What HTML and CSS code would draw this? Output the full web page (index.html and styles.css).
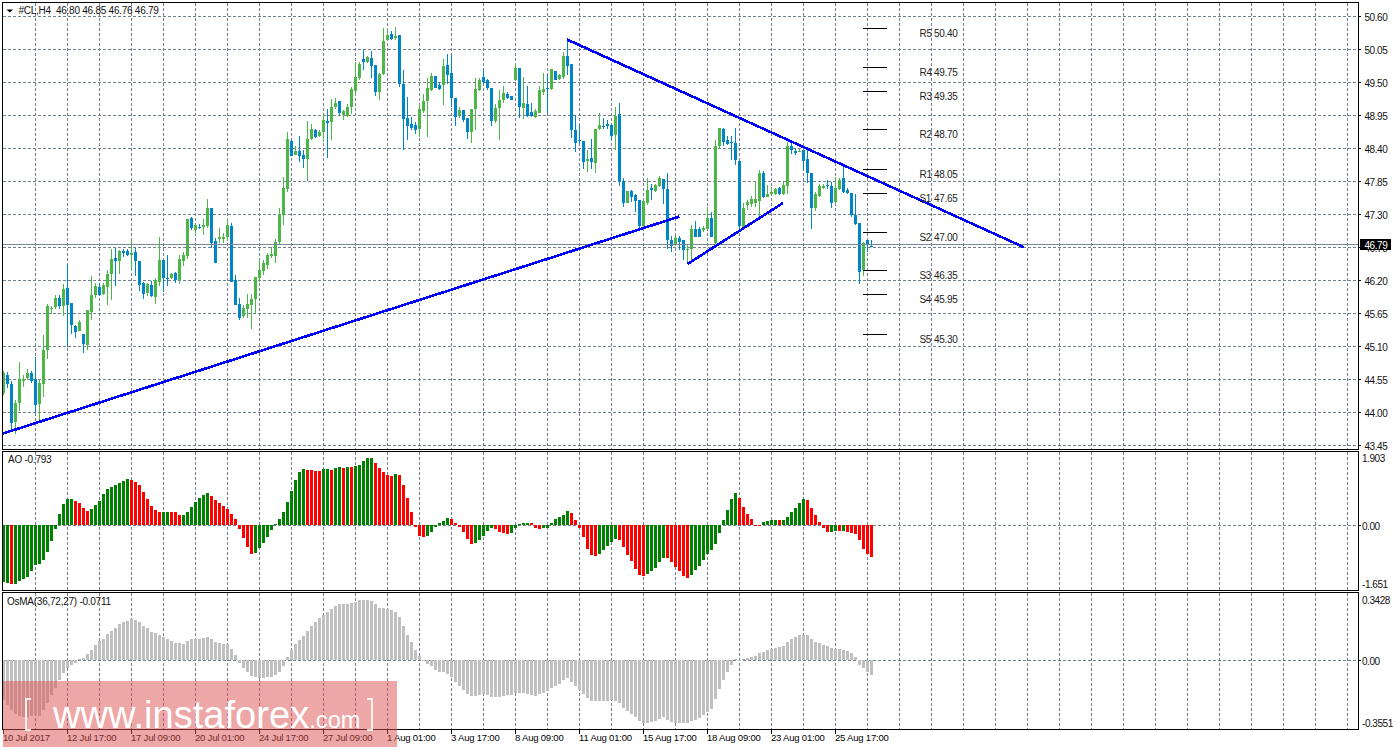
FILE: index.html
```html
<!DOCTYPE html>
<html lang="en">
<head>
<meta charset="utf-8">
<title>#CL,H4</title>
<link rel="stylesheet" href="styles.css">
</head>
<body>
<main class="terminal">
  <svg class="pane pane-main" id="main" viewBox="0 0 1398 450" aria-label="#CL,H4 candlestick chart"></svg>
  <svg class="pane pane-ao" id="ao" viewBox="0 450 1398 141" aria-label="Awesome Oscillator"></svg>
  <svg class="pane pane-osma" id="osma" viewBox="0 591 1398 139" aria-label="OsMA"></svg>
  <div class="time-axis">
    <span class="time">10 Jul 2017</span>
    <span class="time">12 Jul 17:00</span>
    <span class="time">17 Jul 09:00</span>
    <span class="time">20 Jul 01:00</span>
    <span class="time">24 Jul 17:00</span>
    <span class="time">27 Jul 09:00</span>
    <span class="time">1 Aug 01:00</span>
    <span class="time">3 Aug 17:00</span>
    <span class="time">8 Aug 09:00</span>
    <span class="time">11 Aug 01:00</span>
    <span class="time">15 Aug 17:00</span>
    <span class="time">18 Aug 09:00</span>
    <span class="time">23 Aug 01:00</span>
    <span class="time">25 Aug 17:00</span>
  </div>
  <div class="watermark">
    <span class="bracket bracket-left"></span>
    <span class="wm-text">www.instaforex<small class="wm-small">.com</small></span>
    <span class="bracket bracket-right"></span>
  </div>
</main>
<script src="chart.js"></script>
</body>
</html>
```
FILE: styles.css
```css
html, body {
  margin: 0;
  padding: 0;
  background: #fff;
}
.terminal {
  position: relative;
  display: flex;
  flex-direction: column;
  width: 1398px;
  height: 750px;
  overflow: hidden;
  background: #fff;
  font-family: "Liberation Sans", Arial, sans-serif;
}
.pane {
  display: block;
  flex: none;
  width: 1398px;
  overflow: visible;
}
.pane-main { height: 450px; }
.pane-ao { height: 141px; }
.pane-osma { height: 139px; }

.grid-line {
  stroke: #708090;
  stroke-width: 1;
  stroke-dasharray: 3 2;
  shape-rendering: crispEdges;
}
.price-line {
  stroke: #778899;
  stroke-width: 1;
  shape-rendering: crispEdges;
}
.frame-line, .axis-tick, .pivot {
  stroke: #000;
  stroke-width: 1;
  shape-rendering: crispEdges;
}
.wick, .body, .bar { shape-rendering: crispEdges; }
.up { fill: #4cb748; }
.down { fill: #0085c7; }
.ao-up { fill: #008000; }
.ao-down { fill: #ff0000; }
.osma-bar { fill: #c0c0c0; }
.trend {
  stroke: #0000ff;
  stroke-width: 2.6;
  fill: none;
  shape-rendering: crispEdges;
}
.marker { fill: #000; }
.label {
  font-family: "Liberation Sans", Arial, sans-serif;
  font-size: 10px;
  fill: #111;
  dominant-baseline: central;
}
.legend { letter-spacing: -0.25px; white-space: pre; }
.price-label { letter-spacing: -0.45px; }
.pivot-label { letter-spacing: -0.3px; fill: #222; }
.current-box { fill: #000; }
.current-text { fill: #fff; letter-spacing: -0.45px; }

.time-axis {
  display: flex;
  flex: none;
  height: 20px;
  padding-left: 3px;
  font-size: 9.5px;
  line-height: 10px;
  color: #000;
}
.time {
  flex: 0 0 64px;
  padding-top: 3px;
  box-sizing: border-box;
  white-space: nowrap;
  letter-spacing: -0.2px;
  background: linear-gradient(#000, #000) 0 0 / 1px 4px no-repeat;
}

.watermark {
  position: absolute;
  left: 3px;
  top: 681px;
  width: 394px;
  height: 66px;
  background: rgba(220, 80, 80, 0.5);
  color: #fff;
}
.wm-text {
  position: absolute;
  left: 50px;
  top: 16px;
  font-size: 38px;
  line-height: 36px;
  letter-spacing: 0.05px;
  white-space: nowrap;
}
.wm-small { font-size: 23.5px; }
.bracket {
  position: absolute;
  top: 17px;
  width: 6px;
  height: 33px;
  border: 2px solid #fff;
  box-sizing: border-box;
  opacity: 0.85;
}
.bracket-left { left: 22px; border-right: 0; }
.bracket-right { left: 364px; border-left: 0; }
```
FILE: chart.js
```js
var NS = 'http://www.w3.org/2000/svg';

function el(parent, name, attrs, text) {
  var n = document.createElementNS(NS, name);
  for (var key in attrs) n.setAttribute(key, attrs[key]);
  if (text !== undefined) n.textContent = text;
  parent.appendChild(n);
  return n;
}

/* dir, wick top, body top, body bottom, wick bottom (screen px) */
var C = [
'g371 373 393 395','b372 375 384 388','b381 384 423 429','g400 403 422 434','g362 379 403 411','g375 379 381 387','g369 373 378 380','b371 373 381 383',
'b357 379 405 412','g380 383 404 422','g335 350 384 397','g304 306 350 359','g306 308 309 314','g295 298 307 309','b295 298 306 309','g284 289 306 316',
'b264 288 305 347','b303 303 325 334','b325 326 332 338','g320 322 331 331','b334 334 344 353','g310 310 345 350','g276 295 312 320','g283 286 295 298',
'b283 287 295 296','g283 285 294 295','g270 274 287 305','g249 259 274 300','b248 258 261 286','g250 251 261 274','b249 251 253 257','b249 251 255 256',
'g240 253 255 270','b248 252 261 276','b261 261 285 291','b282 283 294 299','g283 284 293 296','b281 285 296 297','g278 280 297 304','g237 260 282 286',
'b260 260 278 292','b255 278 279 286','g273 274 278 279','b272 273 280 283','g255 259 280 284','g252 255 261 266','g219 219 256 259','b217 218 228 230',
'g224 225 230 235','b224 227 228 229','g219 225 227 235','g199 208 226 228','b208 208 243 248','b238 241 263 263','g228 237 239 243','g233 237 239 243',
'g218 225 237 240','b223 226 282 282','b275 280 305 305','b298 304 318 320','g305 308 316 318','g294 304 309 318','g294 299 305 329','g277 277 299 314',
'g260 270 278 282','g260 263 271 275','g253 255 265 269','g247 254 256 258','g239 242 256 263','g208 214 242 245','g177 188 215 225','g132 139 189 192',
'b140 141 156 156','g146 151 155 155','b136 151 156 162','b150 155 159 168','g121 139 159 181','g124 129 139 140','b129 130 137 138','g130 132 136 137',
'g115 120 132 142','b109 121 123 158','g99 107 122 140','g98 103 107 109','b101 101 113 115','g110 111 115 120','g104 107 116 117','g87 89 107 114',
'g62 77 91 96','g62 64 78 80','b50 59 62 70','g56 57 62 63','b51 58 66 78','b65 65 92 96','g73 74 92 100','g28 41 74 75',
'g28 35 40 40','b31 34 39 40','g27 36 38 40','b35 35 84 87','b70 84 119 150','b97 118 126 140','b117 124 128 130','b122 125 130 134',
'g104 109 129 137','g94 101 111 113','g78 88 101 137','g73 76 90 91','b76 76 88 88','b82 85 89 90','g59 66 85 105','b54 65 75 84',
'b55 73 98 107','b98 98 117 126','g107 110 115 118','b110 110 120 122','b118 118 132 139','g109 109 132 143','g78 89 109 130','g78 80 90 91',
'b69 77 82 84','b79 80 88 90','b88 88 121 126','g104 108 121 123','g90 100 108 140','g86 93 100 103','b92 94 98 99','b96 96 100 100',
'g63 68 80 80','b68 68 107 118','g77 103 108 119','b86 104 116 117','b103 112 116 117','g109 111 117 118','g86 90 113 113','g73 89 92 95',
'b74 88 89 113','g69 69 89 90','b71 71 80 80','g74 75 79 80','g52 56 77 79','b40 56 66 75','b64 64 130 138','b115 130 143 152',
'b125 140 141 144','b141 141 162 169','g150 159 161 172','b139 158 162 169','g129 129 163 173','g113 125 129 130','b118 126 127 129','b120 124 126 129',
'b125 125 136 140','g107 116 135 150','b103 114 181 186','b178 181 203 207','g191 191 203 203','b190 191 197 202','b194 195 201 212','b200 200 226 229',
'g200 201 226 228','g178 190 203 205','b184 188 190 200','g184 185 191 192','g176 178 186 187','b179 179 189 204','b173 189 240 249','b236 240 246 252',
'g236 238 245 246','b236 238 242 250','b240 240 250 260','g244 249 250 264','g225 229 249 260','b221 229 237 237','b227 229 237 237','g226 228 230 232',
'g207 218 229 230','b212 218 237 237','g140 146 243 248','g128 128 146 149','b128 129 142 146','b136 140 144 145','b136 142 143 160','b128 143 160 165',
'b161 161 226 230','g203 208 227 229','g200 202 205 210','g196 199 204 207','g181 199 203 207','g170 173 201 217','b171 173 197 198','g185 194 197 197',
'g187 192 194 195','g188 189 194 195','b187 188 194 195','g182 185 194 195','g142 146 186 194','b142 146 150 154','b148 151 153 155','g149 151 152 152',
'b150 150 161 170','b150 159 173 183','b173 173 208 229','g192 194 208 211','g184 186 196 197','g184 186 188 189','b180 185 186 189','b182 186 203 208',
'g177 188 202 203','g178 180 189 190','b164 178 192 193','b188 190 193 194','b193 193 215 217','b194 215 224 225','b223 223 272 284','g242 243 270 276',
'b240 240 244 252','b240 246 247 247'
];

var AO = [
-57,-57.5,-59,-59,-56,-54,-52,-46,-40,-39,-35,-27,-16,-4,11,21,26,26,24,22,17,14,16,20,24,31,36,38,40,42,44,46,
45,43,40,33,26,19,15,13,13,13,13,13,10,10,13,18,23,27,30,32,29,25,22,19,16,11,6,-4,-13,-22,-29,-28,-23,-18,-12,-5,1,6,13,23,34,45,
53,56,55,55,54,54,56,56,55,57,58,57,58,58,59,60,64,67,67,62,57,53,50,49,51,50,40,27,13,-2,-11,-12,-11,-7,-2,2,4,7,
6,2,-2,-7,-14,-19,-18,-15,-11,-6,-3,-4,-7,-8,-9,-8,-3,1,2,2,2,-3,-4,-3,-3,2,6,8,10,14,12,5,-3,-12,-24,-30,-31,-29,-25,-21,-17,-14,
-15,-22,-30,-36,-44,-50,-51,-49,-46,-43,-37,-33,-33,-37,-42,-46,-51,-53,-50,-45,-41,-35,-29,-25,-19,-8,5,15,26,32,27,18,11,6,-1,-1,3,4,5,5,5,5,8,13,17,22,26,25,17,10,3,-3,-7,-7,-6,-6,-6,-7,-8,-9,-15,-24,-29,-32
];
var AO_RED = [[2,2],[18,21],[32,39],[42,44],[52,62],[76,79],[82,82],[85,85],[87,87],[93,97],[99,105],[112,117],[123,126],[132,134],[142,148],[154,160],[166,171],[184,189],[194,194],[201,206],[209,209],[211,217]];

var OSMA = [
-40,-45,-50,-54,-56,-57,-57,-56,-55,-56,-50,-43,-35,-28,-20,-13,-8,-5,-3,1,2,6,10,15,19,21,26,29,32,36,38,39,41,40,38,34,32,28,27,25,23,21,19,17,17,16,19,21,21,21,22,23,21,18,17,16,16,11,5,
-3,-8,-12,-16,-17,-18,-18,-17,-17,-15,-12,-6,3,10,16,20,24,29,34,38,42,45,48,51,54,56,56,56,57,58,60,60,60,59,56,52,52,51,50,48,43,34,25,18,10,4,0,-4,-6,-10,-12,-12,-14,
-17,-22,-26,-30,-34,-36,-36,-35,-34,-35,-37,-37,-37,-36,-35,-35,-33,-33,-33,-34,-35,-36,-34,-33,-31,-28,-26,-24,-20,-18,-22,-26,-30,-34,-38,-41,-41,-41,-41,-41,-40,-41,-43,-48,-51,-54,-57,-61,-63,-63,-62,-61,-59,-57,-60,-62,-63,-63,-63,-63,-61,-60,-58,-55,-52,-49,-39,-29,-20,-12,-5,1,0.5,1,2,3,4,7,8,10,11,12,13,14,18,21,23,25,25,25,21,18,17,15,14,12,11,11,10,9,7,3,-5,-8,-12,-15
];

var LEFT = 3, RIGHT = 1358;

function gridV(svg, y1, y2) {
  for (var i = 0; i < 42; i++) {
    var x = 35.5 + 32 * i;
    el(svg, 'line', { 'class': 'grid-line', x1: x, x2: x, y1: y1, y2: y2 });
  }
}
function gridH(svg, y) {
  el(svg, 'line', { 'class': 'grid-line', x1: LEFT, x2: RIGHT, y1: y, y2: y });
}
function frame(svg, top, bottom) {
  [[LEFT - 1, top + .5, RIGHT + 1, top + .5], [LEFT - 1, bottom + .5, RIGHT + 1, bottom + .5],
   [2.5, top, 2.5, bottom + 1], [RIGHT + .5, top, RIGHT + .5, bottom + 1]].forEach(function (p) {
    el(svg, 'line', { 'class': 'frame-line', x1: p[0], y1: p[1], x2: p[2], y2: p[3] });
  });
}
function tick(svg, y) {
  el(svg, 'line', { 'class': 'axis-tick', x1: RIGHT, x2: RIGHT + 3, y1: y, y2: y });
}
function label(svg, x, y, text, cls) {
  return el(svg, 'text', { 'class': 'label ' + (cls || ''), x: x, y: y }, text);
}

/* main pane */
(function () {
  var svg = document.getElementById('main');
  gridV(svg, 3, 449);
  for (var i = 0; i < 14; i++) {
    var y = 16.5 + 33 * i;
    gridH(svg, y);
    tick(svg, y);
    label(svg, 1364.5, y + .5, (50.6 - .55 * i).toFixed(2), 'price-label');
  }
  C.forEach(function (row, k) {
    var up = row[0] === 'g';
    var v = row.slice(1).split(' ').map(Number);
    var cls = up ? 'up' : 'down';
    el(svg, 'rect', { 'class': 'wick ' + cls, x: 3 + 4 * k, y: v[0], width: 1, height: Math.max(1, v[3] - v[0]) });
    var left = Math.max(3, 2 + 4 * k);
    el(svg, 'rect', { 'class': 'body ' + cls, x: left, y: v[1], width: 2 + 4 * k + 3 - left, height: Math.max(1, v[2] - v[1]) });
  });
  el(svg, 'line', { 'class': 'price-line', x1: LEFT, x2: RIGHT, y1: 244.5, y2: 244.5 });
  [[3, 433.5, 679.5, 216.5], [687.5, 264, 783, 203], [567, 39.5, 1024, 247.3]].forEach(function (t) {
    el(svg, 'line', { 'class': 'trend', x1: t[0], y1: t[1], x2: t[2], y2: t[3] });
  });
  [28, 67, 91, 129, 169, 193, 232, 270, 294, 334].forEach(function (y) {
    el(svg, 'line', { 'class': 'pivot', x1: 863, x2: 887, y1: y + .5, y2: y + .5 });
  });
  [['R5', '50.40', 33], ['R4', '49.75', 72.5], ['R3', '49.35', 96], ['R2', '48.70', 134], ['R1', '48.05', 174],
   ['S1', '47.65', 198.5], ['S2', '47.00', 237.5], ['S3', '46.35', 275.5], ['S4', '45.95', 299.5], ['S5', '45.30', 339.5]].forEach(function (p) {
    label(svg, 919.5, p[2], p[0], 'pivot-label');
    label(svg, 934, p[2], p[1], 'pivot-label');
  });
  frame(svg, 2, 449);
  el(svg, 'polygon', { 'class': 'marker', points: '6.5,9.5 13,9.5 9.75,12.5' });
  label(svg, 18.5, 10, '#CL,H4  46.80 46.85 46.76 46.79', 'legend');
  el(svg, 'rect', { 'class': 'current-box', x: 1360, y: 239, width: 31, height: 11 });
  label(svg, 1364.5, 245, '46.79', 'current-text');
})();

function isAoRed(k) {
  return AO_RED.some(function (r) { return k >= r[0] && k <= r[1]; });
}
function bars(svg, data, zero, clsFor) {
  data.forEach(function (v, k) {
    var left = Math.max(3, 2 + 4 * k);
    el(svg, 'rect', {
      'class': 'bar ' + clsFor(k),
      x: left, width: 2 + 4 * k + 3 - left,
      y: v >= 0 ? zero - v : zero, height: Math.max(1, Math.abs(v))
    });
  });
}

/* AO pane */
(function () {
  var svg = document.getElementById('ao');
  gridV(svg, 452, 590);
  gridH(svg, 525.5);
  tick(svg, 525.5);
  bars(svg, AO, 525, function (k) { return isAoRed(k) ? 'ao-down' : 'ao-up'; });
  frame(svg, 451, 590);
  label(svg, 8, 459.5, 'AO -0.793', 'legend');
  label(svg, 1362, 458, '1.903', 'price-label');
  label(svg, 1362, 526, '0.00', 'price-label');
  label(svg, 1362, 584, '-1.651', 'price-label');
})();

/* OsMA pane */
(function () {
  var svg = document.getElementById('osma');
  gridV(svg, 593, 729);
  gridH(svg, 660.5);
  tick(svg, 660.5);
  bars(svg, OSMA, 660, function () { return 'osma-bar'; });
  frame(svg, 592, 729);
  label(svg, 7, 601.5, 'OsMA(36,72,27) -0.0711', 'legend');
  label(svg, 1362, 600, '0.3428', 'price-label');
  label(svg, 1362, 661, '0.00', 'price-label');
  label(svg, 1362, 723, '-0.3551', 'price-label');
})();
```
